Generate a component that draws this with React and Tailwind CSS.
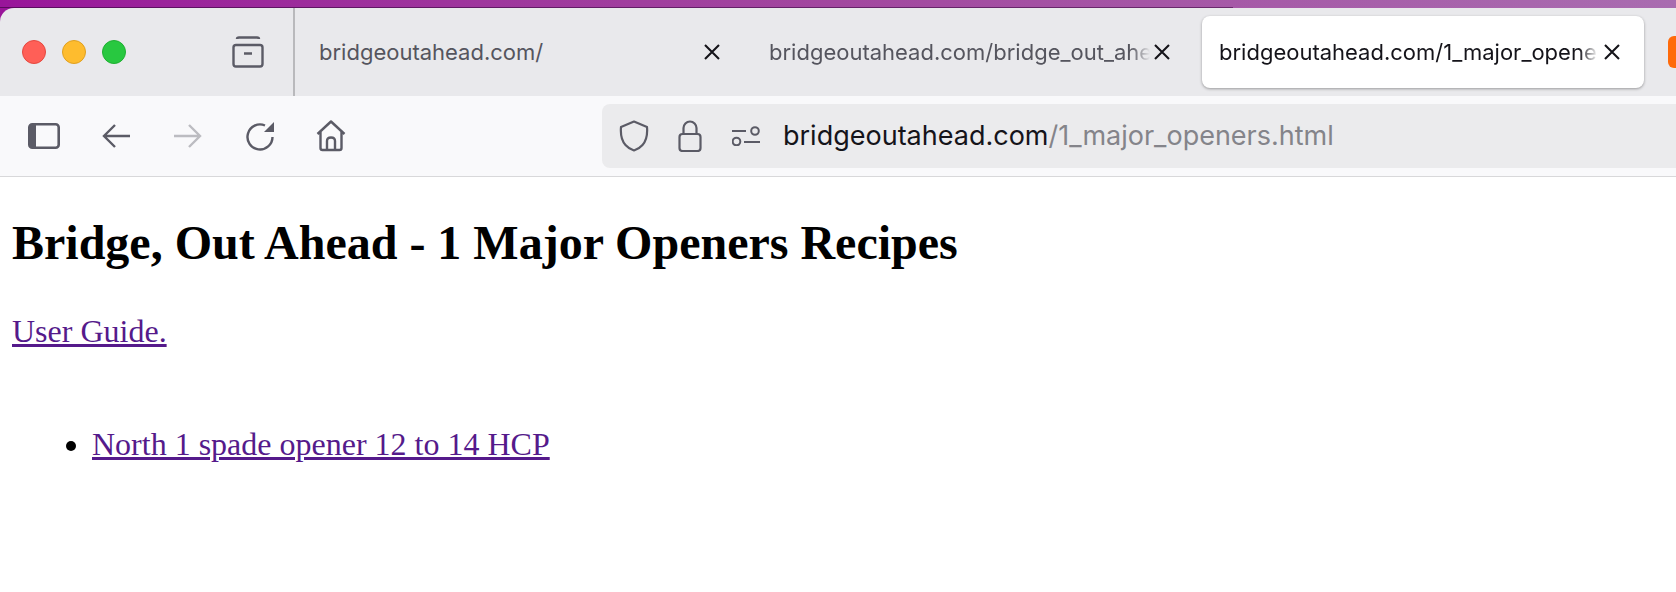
const X = ({ className = "" }) => (
  <svg className={className} width="16" height="16" viewBox="0 0 16 16" fill="none" stroke="#15141a" strokeWidth="2.1">
    <path d="M1 1 L15 15 M15 1 L1 15" />
  </svg>
);

const UI = "font-['Inter',sans-serif]";

function Dot({ bg, border }) {
  return <div className={`w-6 h-6 rounded-full border ${bg} ${border}`} />;
}

function TabBar() {
  return (
    <div className="h-[88px] bg-[#e9e9ec] rounded-tl-[14px] flex items-stretch overflow-hidden">
      <div className="w-[293px] shrink-0 flex items-center">
        <div className="ml-[22px] flex gap-4 -mt-[1px]">
          <Dot bg="bg-[#ff5f57]" border="border-[#e5483f]" />
          <Dot bg="bg-[#febc2e]" border="border-[#e0a020]" />
          <Dot bg="bg-[#28c840]" border="border-[#1fb032]" />
        </div>
        <svg className="ml-[106px] shrink-0" width="32" height="32" viewBox="0 0 32 32" fill="none" stroke="#5b5b66" strokeWidth="2.4">
          <path d="M5 3 Q5 1.5 7 1.5 H25 Q27 1.5 27 3" />
          <rect x="1.5" y="9" width="29" height="21.5" rx="2.5" />
          <path d="M12 17.5 H20" />
        </svg>
      </div>
      <div className="w-[2px] shrink-0 bg-[#b9b9bc]" />
      <div className={`${UI} flex-1 min-w-0 flex text-[22px] leading-[30px] text-[#55555e]`}>
        <div className="w-[455px] shrink-0 pl-[24px] flex items-center">
          <span className="w-[385px] shrink-0">bridgeoutahead.com/</span>
          <X />
        </div>
        <div className="w-[452px] shrink-0 pl-[19px] flex items-center">
          <span className="w-[381px] shrink-0 overflow-hidden whitespace-nowrap [mask-image:linear-gradient(to_right,black_95%,transparent)]">bridgeoutahead.com/bridge_out_ahead.html</span>
          <X className="ml-[4px]" />
        </div>
        <div className="w-[442px] h-[72px] mt-[8px] shrink-0 bg-white rounded-[8px] shadow-[0_1px_3px_rgba(0,0,0,0.35)] pl-[17px] flex items-center text-[#15141a]">
          <span className="w-[379px] shrink-0 overflow-hidden whitespace-nowrap [mask-image:linear-gradient(to_right,black_95%,transparent)]">bridgeoutahead.com/1_major_openers.html</span>
          <X className="ml-[6px]" />
        </div>
        <div className="w-[8px] h-[32px] mt-[28px] ml-[24px] shrink-0 rounded-l-[6px] bg-[#ff6a0a]" />
      </div>
    </div>
  );
}

function Toolbar() {
  return (
    <div className="h-[81px] bg-[#f9f9fb] border-b border-[#d8d8da] flex items-center">
      <svg className="ml-[28px] shrink-0" width="32" height="26" viewBox="0 0 32 26" fill="none">
        <rect x="1.3" y="1.3" width="29.4" height="23.4" rx="3" stroke="#5b5b66" strokeWidth="2.6" />
        <path d="M2 2 H8 V24 H2 Z" fill="#5b5b66" />
      </svg>
      <svg className="ml-[42px] shrink-0" width="28" height="26" viewBox="0 0 28 26" fill="none" stroke="#5b5b66" strokeWidth="2.4">
        <path d="M28 13 H2 M13 2 L2 13 L13 24" />
      </svg>
      <svg className="ml-[44px] shrink-0" width="28" height="26" viewBox="0 0 28 26" fill="none" stroke="#bcbcc1" strokeWidth="2.4">
        <path d="M0 13 H26 M15 2 L26 13 L15 24" />
      </svg>
      <svg className="ml-[44px] shrink-0" width="28" height="30" viewBox="0 0 28 30" fill="none">
        <path d="M26.5 16 A12.5 12.5 0 1 1 19 4.5" stroke="#5b5b66" strokeWidth="2.4" />
        <path d="M28 1 V11 H18 Z" fill="#5b5b66" />
      </svg>
      <svg className="ml-[42px] shrink-0" width="30" height="32" viewBox="0 0 30 32" fill="none" stroke="#5b5b66" strokeWidth="2.4" strokeLinejoin="round">
        <path d="M1.5 14 L15 1.5 L28.5 14 M4.5 11.5 V28 Q4.5 30 6.5 30 H23.5 Q25.5 30 25.5 28 V11.5" />
        <path d="M11 30 V21 Q11 17.5 15 17.5 Q19 17.5 19 21 V30" />
      </svg>
      <div className="ml-[256px] flex-1 min-w-0 h-[64px] bg-[#ebebed] rounded-l-[8px] flex items-center">
        <svg className="ml-[17px] shrink-0" width="30" height="32" viewBox="0 0 30 32" fill="none" stroke="#5b5b66" strokeWidth="2.2">
          <path d="M15 1.5 L28 7 Q29 19 23.5 25 Q20 29 15 30.5 Q10 29 6.5 25 Q1 19 2 7 Z" strokeLinejoin="round" />
        </svg>
        <svg className="ml-[29px] shrink-0" width="24" height="32" viewBox="0 0 24 32" fill="none" stroke="#5b5b66" strokeWidth="2.2">
          <rect x="1.5" y="14" width="21" height="17" rx="3" />
          <path d="M5.5 14 V8 A6.5 6.5 0 0 1 18.5 8 V14" />
        </svg>
        <svg className="ml-[30px] shrink-0" width="28" height="20" viewBox="0 0 28 20" fill="none" stroke="#5b5b66" strokeWidth="2">
          <path d="M0 5 H14 M12 16 H28" />
          <circle cx="23" cy="5" r="3.8" />
          <circle cx="4.5" cy="15.5" r="3.8" />
        </svg>
        <div className={`${UI} ml-[23px] text-[27px] leading-[32px] whitespace-nowrap text-[#15141a]`}>
          bridgeoutahead.com<span className="text-[#84848a]">/1_major_openers.html</span>
        </div>
      </div>
    </div>
  );
}

export default function App() {
  return (
    <div className="w-[1676px] h-[592px] overflow-hidden bg-white font-['Liberation_Serif',serif]">
      <div className="h-2 bg-gradient-to-r from-[#99159a] via-[#a2479f] to-[#a96cb0] flex flex-col justify-end">
        <div className="h-px bg-gradient-to-r from-[#5c0a60] to-[#6a2a6c] w-[1233px]" />
      </div>
      <div className="bg-[#99159a]">
        <TabBar />
      </div>
      <Toolbar />
      <div className="pl-3">
        <h1 className="pt-[38px] text-[48px] leading-[56px] font-bold text-black whitespace-nowrap">Bridge, Out Ahead - 1 Major Openers Recipes</h1>
        <p className="mt-[44px] text-[32px] leading-[32px]">
          <a href="#" className="text-[#551a8b] underline">User Guide.</a>
        </p>
        <ul className="mt-[81px] pl-[80px] list-disc text-[32px] leading-[32px] text-black">
          <li><a href="#" className="text-[#551a8b] underline">North 1 spade opener 12 to 14 HCP</a></li>
        </ul>
      </div>
    </div>
  );
}
